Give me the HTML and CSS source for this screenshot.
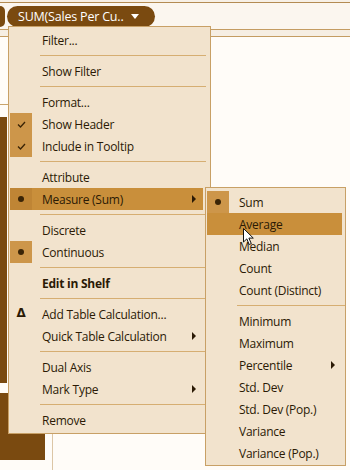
FILE: index.html
```html
<!DOCTYPE html>
<html lang="en">
<head>
  <meta charset="UTF-8" />
  <title>Measure menu</title>
  <link rel="stylesheet" href="styles.css">
</head>
<body>

<div class="workspace">
  <div class="top-edge"></div>
  <div class="shelf">
    <span class="pill-stub"></span>
    <span class="pill">SUM(Sales Per Cu.. <span class="caret"></span></span>
  </div>
  <div class="shelf-band"></div>
  <div class="view">
    <div class="row-col">
      <div class="row-line"></div>
      <div class="axis-strip"></div>
      <div class="axis-block"></div>
    </div>
    <div class="pane"></div>
  </div>
</div>

<div class="menu main-menu">
  <div class="item"><span class="icon"></span>Filter...</div>
  <div class="sep"></div>
  <div class="item"><span class="icon"></span>Show Filter</div>
  <div class="sep"></div>
  <div class="item"><span class="icon"></span>Format...</div>
  <div class="item"><span class="icon on"><svg width="9" height="7" viewBox="0 0 9 7"><polyline points="1,3.5 3.5,6 8,1" fill="none" stroke="#3a2406" stroke-width="1.3"/></svg></span>Show Header</div>
  <div class="item"><span class="icon on"><svg width="9" height="7" viewBox="0 0 9 7"><polyline points="1,3.5 3.5,6 8,1" fill="none" stroke="#3a2406" stroke-width="1.3"/></svg></span>Include in Tooltip</div>
  <div class="sep"></div>
  <div class="item"><span class="icon"></span>Attribute</div>
  <div class="item hover"><span class="icon on dark"><span class="dot"></span></span>Measure (Sum)<span class="arrow"></span></div>
  <div class="sep"></div>
  <div class="item"><span class="icon"></span>Discrete</div>
  <div class="item"><span class="icon on"><span class="dot"></span></span>Continuous</div>
  <div class="sep"></div>
  <div class="item bold"><span class="icon"></span>Edit in Shelf</div>
  <div class="sep"></div>
  <div class="item"><span class="icon delta">Δ</span>Add Table Calculation...</div>
  <div class="item"><span class="icon"></span>Quick Table Calculation<span class="arrow"></span></div>
  <div class="sep"></div>
  <div class="item"><span class="icon"></span>Dual Axis</div>
  <div class="item"><span class="icon"></span>Mark Type<span class="arrow"></span></div>
  <div class="sep"></div>
  <div class="item"><span class="icon"></span>Remove</div>
</div>

<div class="menu sub-menu">
  <div class="item"><span class="icon on"><span class="dot"></span></span>Sum</div>
  <div class="item hover"><span class="icon"></span>Average</div>
  <div class="item"><span class="icon"></span>Median</div>
  <div class="item"><span class="icon"></span>Count</div>
  <div class="item"><span class="icon"></span>Count (Distinct)</div>
  <div class="sep"></div>
  <div class="item"><span class="icon"></span>Minimum</div>
  <div class="item"><span class="icon"></span>Maximum</div>
  <div class="item"><span class="icon"></span>Percentile<span class="arrow"></span></div>
  <div class="item"><span class="icon"></span>Std. Dev</div>
  <div class="item"><span class="icon"></span>Std. Dev (Pop.)</div>
  <div class="item"><span class="icon"></span>Variance</div>
  <div class="item"><span class="icon"></span>Variance (Pop.)</div>
</div>

<!-- mouse pointer over "Average" -->
<svg class="cursor" width="12" height="18" viewBox="0 0 12 18">
  <path d="M0.5 0.5 L0.5 14 L3.8 10.9 L6.2 16.5 L8.3 15.6 L5.9 10.1 L10.3 10.1 Z" fill="#fff" stroke="#111" stroke-width="1"/>
</svg>

</body>
</html>
```

FILE: styles.css
```css
body {
  margin: 0;
  width: 350px;
  height: 470px;
  overflow: hidden;
  background: #fffcf8;
  font-family: "Open Sans", "Noto Sans", sans-serif;
}

.workspace {
  display: flex;
  flex-direction: column;
  height: 470px;
}

.top-edge {
  height: 2px;
  background: #f7f0e6;
}

.shelf {
  height: 26px;
  border-top: 1px solid #b38b52;
  background: #fbf6ef;
  display: flex;
  align-items: center;
}

.pill-stub {
  width: 5px;
  height: 21px;
  background: #7a4a10;
  border-radius: 0 10px 10px 0;
  margin-right: 2px;
}

.pill {
  width: 148px;
  height: 21px;
  box-sizing: border-box;
  padding-left: 11px;
  background: #7a4a10;
  border-radius: 11px;
  color: #fff;
  font-size: 12.5px;
  letter-spacing: -0.2px;
  line-height: 21px;
  white-space: nowrap;
}

.caret {
  display: inline-block;
  margin-left: 4px;
  width: 0;
  height: 0;
  border-left: 4px solid transparent;
  border-right: 4px solid transparent;
  border-top: 5px solid #fff;
  vertical-align: 2px;
}

.shelf-band {
  height: 6px;
  border-top: 1px solid #c49c62;
  border-bottom: 1px solid #c49c62;
  background: #f6eee3;
}

.view {
  flex: 1;
  display: flex;
}

.row-col {
  width: 52px;
  display: flex;
  flex-direction: column;
}

.row-line {
  width: 8px;
  height: 1px;
  margin-top: 67px;
  background: #c9a46c;
}

.axis-strip {
  width: 7px;
  height: 266px;
  margin-top: 12px;
  background: #7a4a10;
}

.axis-block {
  width: 45px;
  height: 67px;
  margin-top: 10px;
  background: #7a4a10;
}

.pane {
  flex: 1;
  border-left: 1px solid #dcc6a6;
}

/* context menus */
.menu {
  position: absolute;
  box-sizing: border-box;
  background: #f2e3cd;
  border: 1px solid #c8a066;
  color: #2b1a05;
  font-size: 12px;
  letter-spacing: -0.25px;
}

.main-menu {
  left: 8px;
  top: 26px;
  width: 203px;
  padding: 2px 7px 2px 1px;
}

.sub-menu {
  left: 205px;
  top: 187px;
  width: 141px;
  padding: 3px 3px 1px 1px;
}

.item {
  height: 22px;
  display: flex;
  align-items: center;
  white-space: nowrap;
}

.item.hover {
  background: #c98f3b;
}

.item.bold {
  font-weight: bold;
}

.icon {
  width: 22px;
  height: 22px;
  margin-right: 10px;
  display: flex;
  align-items: center;
  justify-content: center;
  flex: none;
}

.icon.on {
  background: #cd964a;
}

.icon.dark {
  background: #bf8535;
}

.dot {
  width: 6px;
  height: 6px;
  border-radius: 50%;
  background: #3a2406;
}

.delta {
  font-size: 12px;
  font-weight: bold;
  font-family: "DejaVu Sans", sans-serif;
  padding-bottom: 3px;
  box-sizing: border-box;
}

.arrow {
  margin-left: auto;
  margin-right: 7px;
  width: 0;
  height: 0;
  border-top: 4px solid transparent;
  border-bottom: 4px solid transparent;
  border-left: 4px solid #2b1a05;
}

.sep {
  height: 1px;
  margin: 4px -3px 4px 30px;
  background: #d6ae72;
}

.cursor {
  position: absolute;
  left: 243px;
  top: 228px;
}
```
